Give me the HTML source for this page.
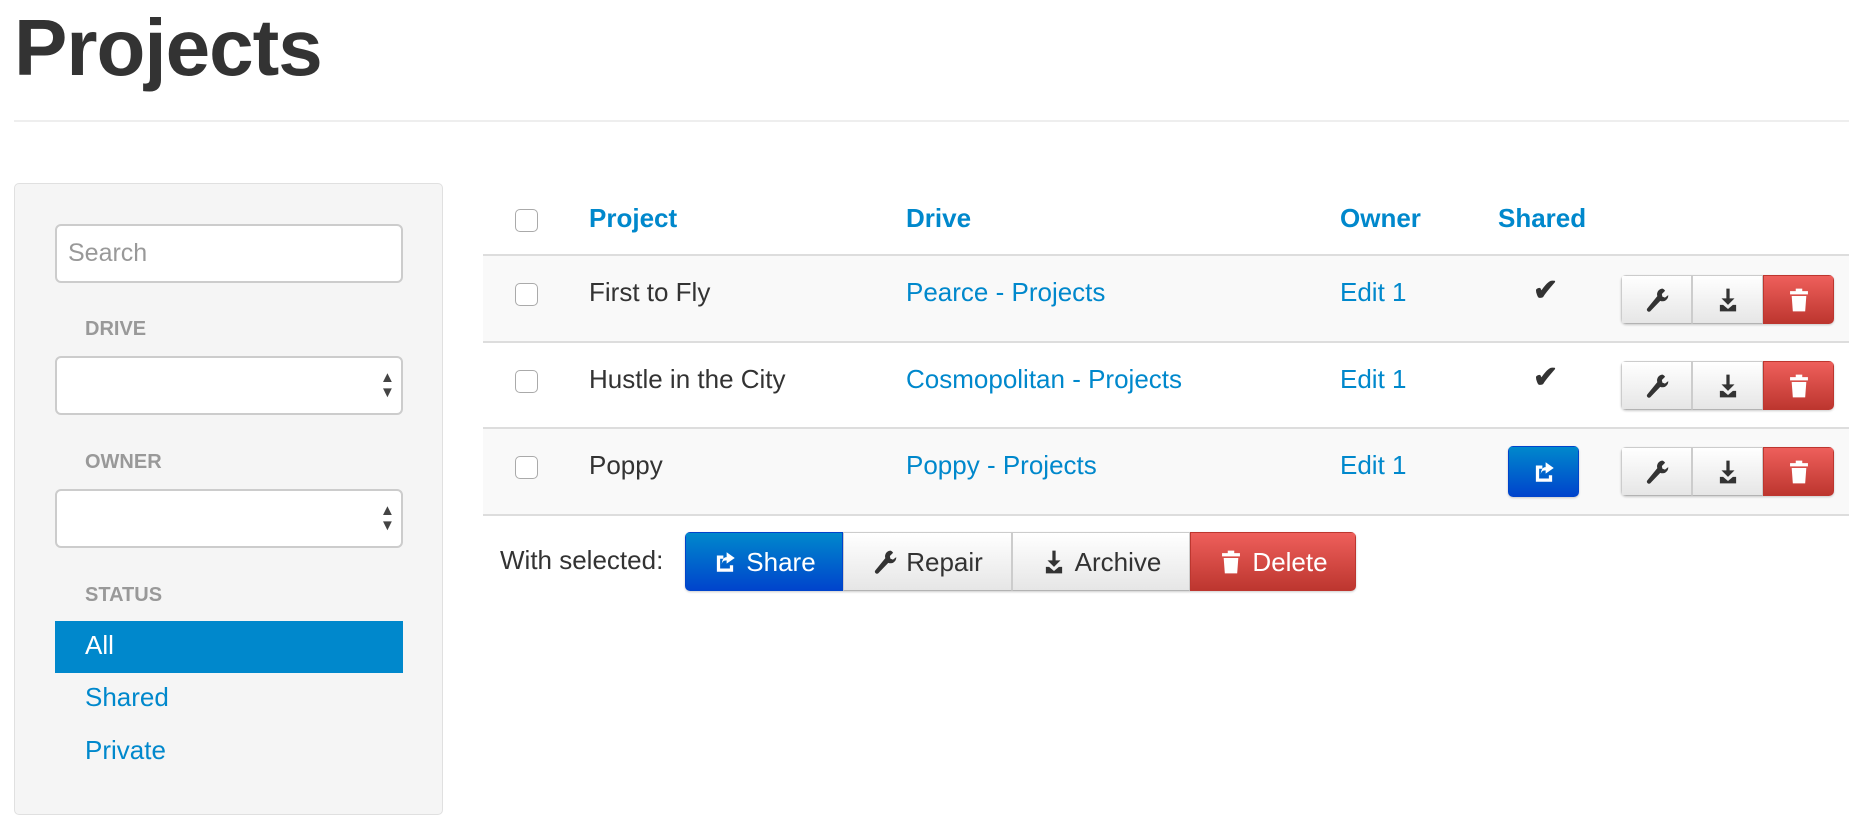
<!DOCTYPE html>
<html><head><meta charset="utf-8"><style>
*{box-sizing:border-box;margin:0;padding:0}
body{width:1866px;height:834px;background:#fff;font-family:"Liberation Sans",Arial,sans-serif;color:#333;position:relative;overflow:hidden}
.a{position:absolute}
h1{position:absolute;left:14px;top:2px;font-size:80px;font-weight:bold;color:#333;letter-spacing:-1px}
.hr{left:14px;top:120px;width:1835px;height:2px;background:#eee}
.side{left:14px;top:183px;width:429px;height:632px;background:#f5f5f5;border:1px solid #e0e0e0;border-radius:5px}
.inp{left:55px;width:348px;height:59px;background:#fff;border:2px solid #ccc;border-radius:6px}
.lbl{left:85px;font-size:20px;font-weight:bold;color:#999}
.lnk{color:#0088cc}
.t{font-size:26px;line-height:30px}
.th{font-weight:bold;color:#0088cc}
.row{left:483px;width:1366px;border-bottom:2px solid #ddd}
.cb{left:515px;width:23px;height:23px;border:1.5px solid #aaa;border-radius:5px;background:#fff}
.bg{display:flex;position:absolute;height:49px;border-radius:5px;overflow:hidden;box-shadow:0 1px 2px rgba(0,0,0,.2)}
.b{display:flex;align-items:center;justify-content:center;height:100%;background:linear-gradient(#fff,#e6e6e6);border:1px solid #ccc;border-bottom-color:#b3b3b3;color:#333}
.r{background:linear-gradient(#ee5f5b,#bd362f);border-color:#bd362f;color:#fff}
.bl{background:linear-gradient(#0088cc,#0044cc);border-color:#0044cc;color:#fff}
svg{width:26px;height:26px}
.ck{font-size:30px;font-weight:bold}
</style></head><body>
<h1>Projects</h1>
<div class="a hr"></div>
<div class="a side"></div>
<div class="a inp" style="top:224px"></div>
<div class="a t" style="left:68px;top:238px;color:#999;font-size:25px">Search</div>
<div class="a lbl" style="top:318px">DRIVE</div>
<div class="a inp" style="top:356px"></div>
<div class="a" style="left:380px;top:370px;font-size:15px;line-height:15px;color:#444">▲<br>▼</div>
<div class="a lbl" style="top:451px">OWNER</div>
<div class="a inp" style="top:489px"></div>
<div class="a" style="left:380px;top:503px;font-size:15px;line-height:15px;color:#444">▲<br>▼</div>
<div class="a lbl" style="top:584px">STATUS</div>
<div class="a" style="left:55px;top:621px;width:348px;height:52px;background:#0088cc"></div>
<div class="a t" style="left:85px;top:630px;color:#fff">All</div>
<div class="a t lnk" style="left:85px;top:682px">Shared</div>
<div class="a t lnk" style="left:85px;top:735px">Private</div>

<div class="a row" style="top:254px;height:0"></div>
<div class="a cb" style="top:209px"></div>
<div class="a t th" style="left:589px;top:203px">Project</div>
<div class="a t th" style="left:906px;top:203px">Drive</div>
<div class="a t th" style="left:1340px;top:203px">Owner</div>
<div class="a t th" style="left:1498px;top:203px">Shared</div>

<div class="a row" style="top:256px;height:87px;background:#f9f9f9"></div>
<div class="a row" style="top:343px;height:86px"></div>
<div class="a row" style="top:429px;height:87px;background:#f9f9f9"></div>

<div class="a cb" style="top:283px"></div>
<div class="a t" style="left:589px;top:277px">First to Fly</div>
<div class="a t lnk" style="left:906px;top:277px">Pearce - Projects</div>
<div class="a t lnk" style="left:1340px;top:277px">Edit 1</div>
<div class="a t ck" style="left:1533px;top:276px">✔</div>

<div class="a cb" style="top:370px"></div>
<div class="a t" style="left:589px;top:364px">Hustle in the City</div>
<div class="a t lnk" style="left:906px;top:364px">Cosmopolitan - Projects</div>
<div class="a t lnk" style="left:1340px;top:364px">Edit 1</div>
<div class="a t ck" style="left:1533px;top:363px">✔</div>

<div class="a cb" style="top:456px"></div>
<div class="a t" style="left:589px;top:450px">Poppy</div>
<div class="a t lnk" style="left:906px;top:450px">Poppy - Projects</div>
<div class="a t lnk" style="left:1340px;top:450px">Edit 1</div>
<div class="bg" style="left:1508px;top:446px;width:71px;height:51px"><div class="b bl" style="width:71px"><svg viewBox="0 0 16 16"><path fill="#fff" d="M3 4h4v2H5v6h6V10h2v4H3z M9 2l5 3.5-5 3.5V7c-2 0-3 1-3 3 0-3 1-5 3-5z"/></svg></div></div>

<div class="bg" style="left:1621px;top:275px"><div class="b" style="width:71px"><svg viewBox="0 0 16 16"><path fill="#333" d="M11.5 1a3.5 3.5 0 0 0-3.3 4.6L2 13.2a1.3 1.3 0 0 0 1.8 1.8L10 8.5A3.5 3.5 0 0 0 14.9 5l-2 1.5-1.6-.6-.3-1.6 2-2A3.5 3.5 0 0 0 11.5 1z"/></svg></div><div class="b" style="width:71px"><svg viewBox="0 0 16 16"><path fill="#333" d="M7 1h2v6h3l-4 4-4-4h3z M3 11h2l3 2.5 3-2.5h2v4H3z"/></svg></div><div class="b r" style="width:71px"><svg viewBox="0 0 16 16"><path fill="#fff" d="M6 1h4v1.5h3.5v2h-11v-2H6z M3.5 5.5h9l-.7 9.5H4.2z"/></svg></div></div>
<div class="bg" style="left:1621px;top:361px"><div class="b" style="width:71px"><svg viewBox="0 0 16 16"><path fill="#333" d="M11.5 1a3.5 3.5 0 0 0-3.3 4.6L2 13.2a1.3 1.3 0 0 0 1.8 1.8L10 8.5A3.5 3.5 0 0 0 14.9 5l-2 1.5-1.6-.6-.3-1.6 2-2A3.5 3.5 0 0 0 11.5 1z"/></svg></div><div class="b" style="width:71px"><svg viewBox="0 0 16 16"><path fill="#333" d="M7 1h2v6h3l-4 4-4-4h3z M3 11h2l3 2.5 3-2.5h2v4H3z"/></svg></div><div class="b r" style="width:71px"><svg viewBox="0 0 16 16"><path fill="#fff" d="M6 1h4v1.5h3.5v2h-11v-2H6z M3.5 5.5h9l-.7 9.5H4.2z"/></svg></div></div>
<div class="bg" style="left:1621px;top:447px"><div class="b" style="width:71px"><svg viewBox="0 0 16 16"><path fill="#333" d="M11.5 1a3.5 3.5 0 0 0-3.3 4.6L2 13.2a1.3 1.3 0 0 0 1.8 1.8L10 8.5A3.5 3.5 0 0 0 14.9 5l-2 1.5-1.6-.6-.3-1.6 2-2A3.5 3.5 0 0 0 11.5 1z"/></svg></div><div class="b" style="width:71px"><svg viewBox="0 0 16 16"><path fill="#333" d="M7 1h2v6h3l-4 4-4-4h3z M3 11h2l3 2.5 3-2.5h2v4H3z"/></svg></div><div class="b r" style="width:71px"><svg viewBox="0 0 16 16"><path fill="#fff" d="M6 1h4v1.5h3.5v2h-11v-2H6z M3.5 5.5h9l-.7 9.5H4.2z"/></svg></div></div>

<div class="a t" style="left:500px;top:545px">With selected:</div>
<div class="bg t" style="left:685px;top:532px;height:59px">
<div class="b bl" style="width:158px;gap:8px"><svg viewBox="0 0 16 16"><path fill="#fff" d="M3 4h4v2H5v6h6V10h2v4H3z M9 2l5 3.5-5 3.5V7c-2 0-3 1-3 3 0-3 1-5 3-5z"/></svg>Share</div>
<div class="b" style="width:169px;gap:8px"><svg viewBox="0 0 16 16"><path fill="#333" d="M11.5 1a3.5 3.5 0 0 0-3.3 4.6L2 13.2a1.3 1.3 0 0 0 1.8 1.8L10 8.5A3.5 3.5 0 0 0 14.9 5l-2 1.5-1.6-.6-.3-1.6 2-2A3.5 3.5 0 0 0 11.5 1z"/></svg>Repair</div>
<div class="b" style="width:178px;gap:8px"><svg viewBox="0 0 16 16"><path fill="#333" d="M7 1h2v6h3l-4 4-4-4h3z M3 11h2l3 2.5 3-2.5h2v4H3z"/></svg>Archive</div>
<div class="b r" style="width:166px;gap:8px"><svg viewBox="0 0 16 16"><path fill="#fff" d="M6 1h4v1.5h3.5v2h-11v-2H6z M3.5 5.5h9l-.7 9.5H4.2z"/></svg>Delete</div>
</div>
</body></html>
